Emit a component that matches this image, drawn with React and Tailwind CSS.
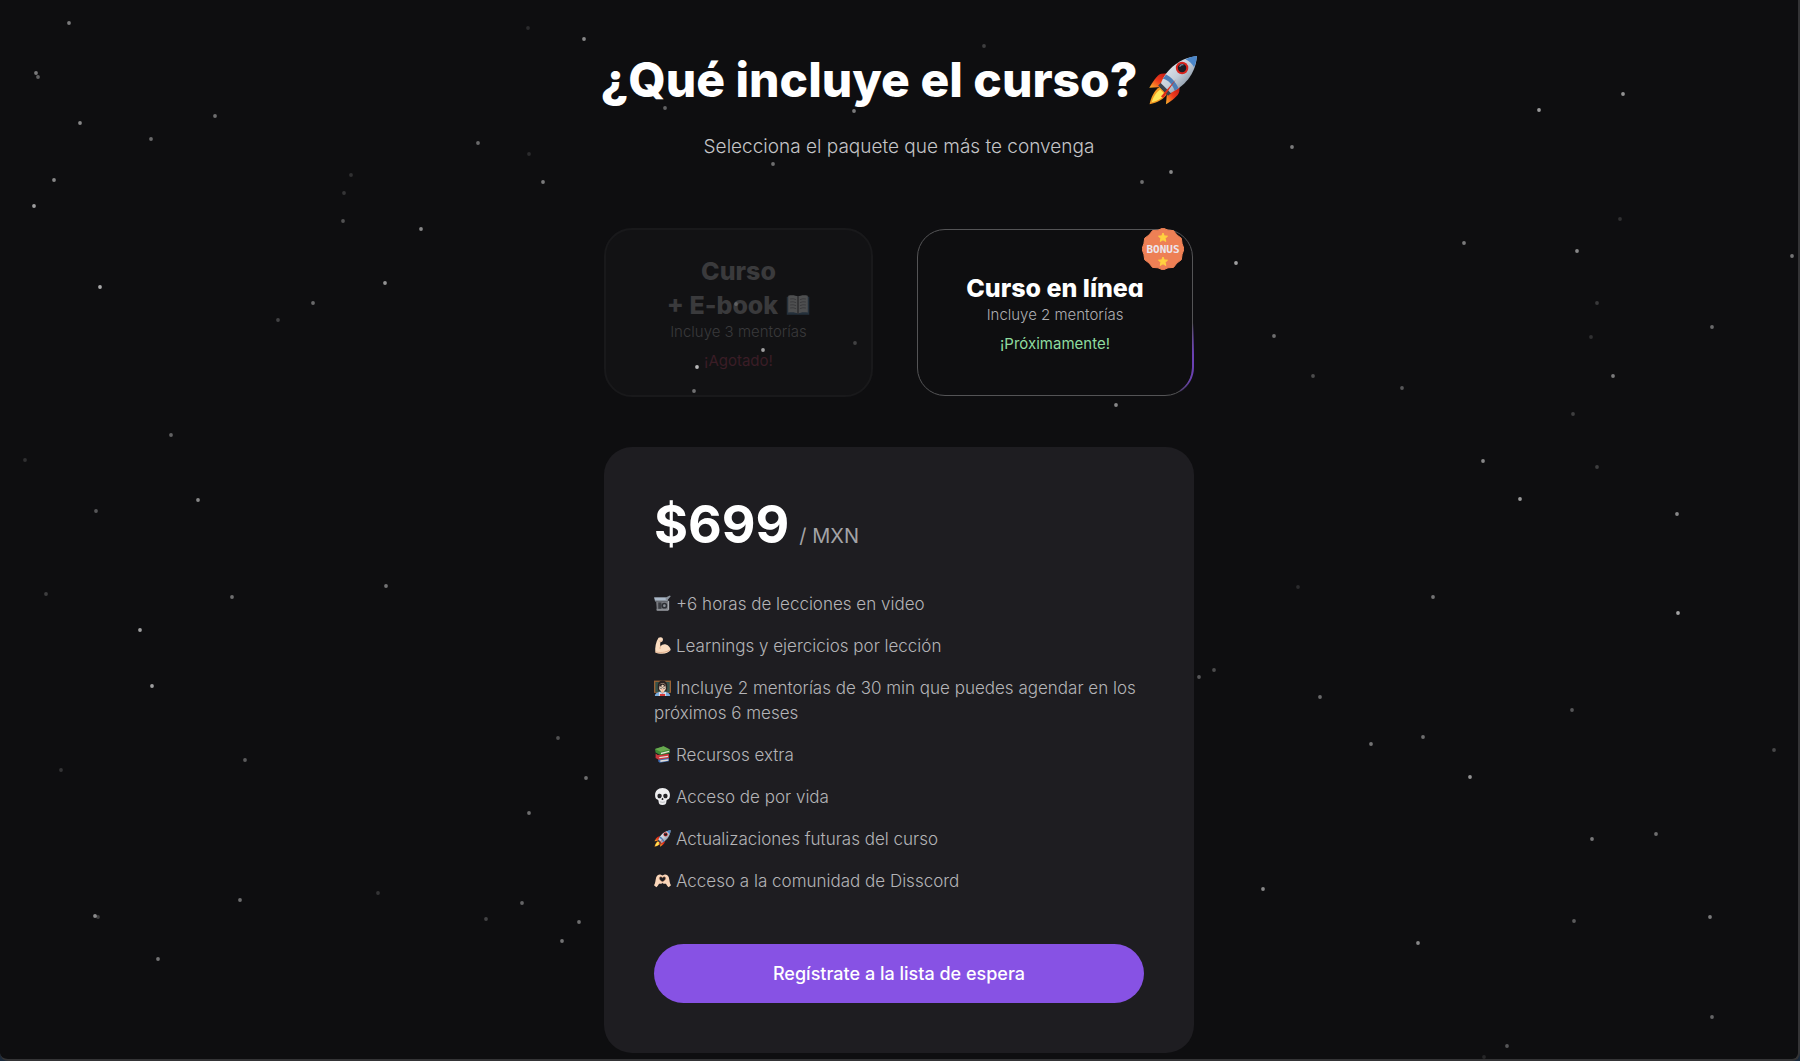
import React from "react";

// Each star: x, y, opacity
const STARS = [
  [69, 23, 0.45], [528, 28, 0.12], [584, 39, 0.5], [36, 73, 0.45], [38, 77, 0.35], [215, 116, 0.4],
  [80, 123, 0.5], [151, 139, 0.38], [478, 143, 0.38], [529, 154, 0.12], [351, 175, 0.14], [54, 180, 0.5],
  [543, 182, 0.45], [344, 193, 0.16], [34, 206, 0.6], [343, 221, 0.28], [421, 229, 0.5], [100, 287, 0.65],
  [385, 283, 0.55], [313, 303, 0.38], [278, 320, 0.22], [171, 435, 0.35], [25, 460, 0.14], [198, 500, 0.5],
  [96, 511, 0.3], [46, 594, 0.2], [232, 597, 0.4], [386, 586, 0.42], [140, 630, 0.6], [152, 686, 0.6],
  [558, 738, 0.28], [245, 760, 0.32], [61, 770, 0.16], [586, 778, 0.4], [529, 813, 0.4], [378, 893, 0.16],
  [240, 900, 0.4], [522, 903, 0.36], [95, 916, 0.52], [98, 917, 0.2], [486, 919, 0.22], [579, 922, 0.4],
  [562, 941, 0.42], [158, 959, 0.42], [1623, 94, 0.55], [1539, 110, 0.58], [1292, 147, 0.45], [1620, 219, 0.14],
  [1464, 243, 0.45], [1577, 251, 0.5], [1792, 256, 0.42], [1236, 263, 0.6], [1597, 303, 0.18], [1712, 327, 0.38],
  [1274, 336, 0.4], [1591, 337, 0.14], [1313, 376, 0.26], [1613, 376, 0.45], [1402, 388, 0.3], [1573, 414, 0.2],
  [1483, 461, 0.5], [1597, 467, 0.2], [1520, 499, 0.58], [1677, 514, 0.5], [1298, 587, 0.12], [1433, 597, 0.42],
  [1678, 613, 0.62], [1214, 670, 0.26], [1199, 677, 0.3], [1320, 697, 0.38], [1572, 710, 0.3], [1423, 737, 0.4],
  [1371, 744, 0.42], [1774, 750, 0.24], [1470, 777, 0.55], [1592, 839, 0.44], [1656, 834, 0.4], [1263, 889, 0.5],
  [1574, 921, 0.32], [1710, 917, 0.45], [1418, 943, 0.5], [1712, 1017, 0.36], [1507, 1046, 0.3], [1484, 1057, 0.1],
  [984, 46, 0.2], [665, 108, 0.35], [854, 111, 0.45], [773, 164, 0.4], [1171, 172, 0.5], [1142, 182, 0.4],
  [1116, 405, 0.5],
];

// Stars that shine through the sold-out package
const FRONT_STARS = [
  [763, 350, 0.6], [697, 367, 0.7], [694, 391, 0.4], [855, 343, 0.2], [736, 304, 0.2],
];

function StarField({ stars }) {
  return (
    <svg className="pointer-events-none absolute inset-0 h-full w-full" aria-hidden="true">
      {stars.map(([x, y, o]) => (
        <circle key={`${x}-${y}`} cx={x} cy={y} r="1.900" fill="#fff" opacity={o} />
      ))}
    </svg>
  );
}

function Rocket({ className }) {
  return (
    <svg viewBox="0 0 32 32" className={className} aria-hidden="true">
      <defs>
        <linearGradient id="rk-body" x1="0" y1="0" x2="1" y2="1">
          <stop offset="0" stopColor="#f4f7fa" />
          <stop offset="0.5" stopColor="#c3cdd8" />
          <stop offset="1" stopColor="#58687c" />
        </linearGradient>
        <linearGradient id="rk-fin" x1="1" y1="0" x2="0" y2="1">
          <stop offset="0" stopColor="#b81410" />
          <stop offset="0.55" stopColor="#ee3b1d" />
          <stop offset="1" stopColor="#fbb52c" />
        </linearGradient>
      </defs>
      <path d="M14 11.500 8.500 12C6 12.400 2.500 18 .8 21l8.400-.6z" fill="url(#rk-fin)" />
      <path d="M20.500 18.500 20 23.500c-.5 2.500-5 6-8.500 8l.8-9z" fill="url(#rk-fin)" />
      <path d="M7.500 20.500 12 25c-2 3.500-6 5.500-11 6.500 1-4.500 3-9 6.500-11z" fill="#f59a23" />
      <path d="M7.800 22 11 25.200c-2 2.400-4.700 4-8.600 5C3.400 26.500 5 24 7.800 22z" fill="#ffe65a" />
      <path d="M6.500 19.500 12.800 26l2.200-1.700L8.300 17.700z" fill="#39434f" />
      <path d="M8.300 18C11 11 18 2.500 31.300.7 30.500 13 22.500 20.500 14.500 24.300z" fill="url(#rk-body)" />
      <path d="M24 2.700C26.300 1.500 29 .9 31.300.7c-.1 2.500-.8 5-1.800 7.200-1.300-2.300-3.200-4.100-5.500-5.200z" fill="#4b86c9" />
      <path d="M11.500 12.400c3.200 1.600 6.500 4.900 8 8.800l-2.400 1.700C15.500 18.500 13 16 9.500 15.200z" fill="#4d7db5" />
      <path d="m8.300 26.500 9.500-10.800-8 11.800z" fill="#df2a17" />
      <circle cx="21.800" cy="8.300" r="4" fill="#d8231c" />
      <circle cx="21.800" cy="8.300" r="2.700" fill="#191c24" />
      <path d="M20.200 7.500c.5-1 1.500-1.500 2.500-1.200" stroke="#75839a" strokeWidth=".8" fill="none" />
    </svg>
  );
}

function OpenBook({ className }) {
  return (
    <svg viewBox="0 0 32 32" className={className} aria-hidden="true">
      <path d="M1 5h30v24H1z" fill="#2f7bbf" />
      <path d="M3 3.500c5-1 10-.5 13 1.500 3-2 8-2.500 13-1.500V26c-5-1-10-.5-13 1.500C13 25.500 8 25 3 26z" fill="#d9dbde" />
      <path d="M16 5v22.500" stroke="#4d5157" strokeWidth="1.600" />
      <path d="M5.500 8q4-1 8 .8M5.500 12q4-1 8 .8M5.500 16q4-1 8 .8M5.500 20q4-1 8 .8M26.500 8q-4-1-8 .8M26.500 12q-4-1-8 .8M26.500 16q-4-1-8 .8M26.500 20q-4-1-8 .8" stroke="#85898f" strokeWidth="1.100" fill="none" />
    </svg>
  );
}

function MovieCamera({ className }) {
  return (
    <svg viewBox="0 0 32 32" className={className} aria-hidden="true">
      <path d="M0 4h23l7-3 1.500 1.500L26 9v3H2z" fill="#8b939d" />
      <path d="M1 5h21v4.500H2z" fill="#a9b8c8" />
      <path d="M4 12h23v17H7c-2 0-3-2-2-4z" fill="#77797f" />
      <path d="M8 14h6v12H8z" fill="#3b3d42" />
      <circle cx="19.500" cy="20" r="5.500" fill="#2c2e33" />
      <circle cx="19.500" cy="20" r="2.500" fill="#8a8f96" />
      <path d="M5 27h22v2.500H5z" fill="#96999e" />
      <path d="M26 11h2.500v17H26z" fill="#a4a7ac" />
    </svg>
  );
}

function Biceps({ className }) {
  return (
    <svg viewBox="0 0 32 32" className={className} aria-hidden="true">
      <path d="M8.500 1.500c2.500-1.500 6-1.500 7.500.5 1.400 2 1 5-.5 6.500-1 1-2.300 1.400-3.500 1.500-.5 3-.4 5.500.1 7.700 2.700-3.400 6.900-4.700 10.500-3.400 4.700 1.600 8.400 5.700 8.900 10.200C28.200 28.800 22 31.500 15.500 31.500c-5.500 0-10.500-.6-13-2.300C1.500 20 3.500 8.500 8.500 1.500z" fill="#fbdcc0" />
      <path d="M12.300 17.200c-.9 1.600-1.200 3-1 4.500M9.500 7.500c1.200.8 2.700 1 4.300.3M3 28c7 2 18 1.800 26-3" stroke="#d39b75" strokeWidth="1.200" fill="none" strokeLinecap="round" />
    </svg>
  );
}

function Teacher({ className }) {
  return (
    <svg viewBox="0 0 32 32" className={className} aria-hidden="true">
      <path d="M0 3h32v23H0z" fill="#9a6335" />
      <path d="M2.500 5.500h27v19h-27z" fill="#35514a" />
      <path d="M8 22C5.500 11 8 3 16 3s10.500 8 8 19z" fill="#2b211f" />
      <path d="M1.500 32c.3-5 5-7.500 10-8.200h9c5 .7 9.700 3.200 10 8.200z" fill="#79aee0" />
      <path d="m10 24 6 4 6-4 1 8H9z" fill="#e8eef5" />
      <path d="M11 28h10v4H11z" fill="#d23838" />
      <path d="M13 20h6v5l-3 2-3-2z" fill="#e8b797" />
      <ellipse cx="16" cy="15.500" rx="6.500" ry="7.500" fill="#fbdcc0" />
      <path d="M9.200 14C10 7.500 20 6 22.800 14c-2.600-.6-5-2-6.300-3.800-1.500 2-4.300 3.400-7.300 3.800z" fill="#2b211f" />
      <circle cx="13" cy="16" r="2.200" fill="none" stroke="#3b3b42" />
      <circle cx="19" cy="16" r="2.200" fill="none" stroke="#3b3b42" />
      <path d="M14 20q2 1.500 4 0" stroke="#c2574c" fill="none" />
    </svg>
  );
}

function Books({ className }) {
  return (
    <svg viewBox="0 0 32 32" className={className} aria-hidden="true">
      <path d="m8 24 18-2.500 2 1v6L11 31.500 8 29z" fill="#3f6db5" />
      <path d="m12 27 15-2.200v3L12 30z" fill="#e2ddd6" />
      <path d="m3 14 4 3 21-2.500v8L9 26l-6-3.500z" fill="#c9383c" />
      <path d="m10 20.500 16.500-2.300v2.600L10 23z" fill="#e6dfd6" />
      <path d="m2 5.500 16-5 12 6v6.500L12 17 3 12z" fill="#3f8a35" />
      <path d="m2 5.500 16-5 12 6L12 11z" fill="#67a84f" />
      <path d="m13 12.800 15.500-4v2.600L13 15.300z" fill="#e0e8d6" />
    </svg>
  );
}

function Skull({ className }) {
  return (
    <svg viewBox="0 0 32 32" className={className} aria-hidden="true">
      <path d="M16 0C7.500 0 2 5.500 2 13c0 4.500 1 7 4.500 8.800 1.800.9 2 2 2.200 4C9 30 11 32 16 32s7-2 7.300-6.200c.2-2 .4-3.100 2.200-4C29 20 30 17.500 30 13 30 5.500 24.500 0 16 0z" fill="#eeeef0" />
      <path d="M6.500 15c0-3 2-4 4.200-4 2.400 0 4 1.400 3.800 4-.2 2.800-2 4.300-4.200 4.300S6.500 18 6.500 15zM25.500 15c0-3-2-4-4.200-4-2.400 0-4 1.400-3.800 4 .2 2.800 2 4.300 4.200 4.300s3.800-1.300 3.800-4.300z" fill="#222226" />
      <path d="M16 18.500c-1.500 1.300-2.200 3-1.500 3.800.5.500 1 .2 1.500-.2.500.4 1 .7 1.500.2.700-.8 0-2.500-1.500-3.800z" fill="#222226" />
      <path d="M11 26q5 2 10 0" stroke="#8d8d93" fill="none" />
    </svg>
  );
}

function HeartHands({ className }) {
  return (
    <svg viewBox="0 0 32 32" className={className} aria-hidden="true">
      <path d="M0 25c2.500-2.500 2.500-9 4-14.500C5.500 5.500 10 3.500 13 5l3 1.500L19 5c3-1.500 7.500.5 9 5.500 1.500 5.500 1.500 12 4 14.500l-4.500 3.500c-2-1.500-3.500-4-5-6.500-2.500.8-4.700.1-6.500-1.500-1.800 1.600-4 2.300-6.500 1.500-1.500 2.500-3 5-5 6.500z" fill="#fbd6ba" />
      <path d="M16 18.500c-4-2-6.200-4.500-6-7 .3-2.700 4-3.400 6-.8 2-2.600 5.700-1.900 6 .8.200 2.500-2 5-6 7z" fill="#1e1d21" stroke="#cf8f69" />
    </svg>
  );
}

function BonusBadge() {
  return (
    <svg viewBox="0 0 42 42" className="absolute top-[-2px] right-2 h-[42px] w-[42px]" role="img" aria-label="Bonus">
      <path
        d="M21 0l5 2.200 5.500.4 3.400 4.300 4.400 3.300.8 5.400L42 21l-1.900 5.400-.8 5.400-4.400 3.300-3.400 4.300-5.500.4L21 42l-5-2.200-5.500-.4-3.400-4.300-4.400-3.300-.8-5.400L0 21l1.900-5.400.8-5.400 4.400-3.300 3.400-4.300 5.500-.4z"
        fill="#ee8055"
        stroke="#ee8055"
        strokeLinejoin="round"
      />
      <path d="m21 5 1.300 2.900 3.200.3-2.400 2.100.7 3.200-2.800-1.700-2.800 1.700.7-3.200-2.400-2.100 3.200-.3zM21 29l1.300 2.900 3.200.3-2.400 2.100.7 3.200-2.800-1.700-2.800 1.700.7-3.200-2.400-2.100 3.200-.3z" fill="#ffd23f" stroke="#ffd23f" strokeLinejoin="round" />
      <text x="21" y="25" textAnchor="middle" className="fill-[#ece6ee] font-['DejaVu_Sans_Mono',monospace] text-[11px] font-bold">
        BONUS
      </text>
    </svg>
  );
}

const FEATURES = [
  [MovieCamera, "+6 horas de lecciones en video"],
  [Biceps, "Learnings y ejercicios por lección"],
  [Teacher, "Incluye 2 mentorías de 30 min que puedes agendar en los próximos 6 meses"],
  [Books, "Recursos extra"],
  [Skull, "Acceso de por vida"],
  [Rocket, "Actualizaciones futuras del curso"],
  [HeartHands, "Acceso a la comunidad de Disscord"],
];

export default function App() {
  return (
    <div className="bg-[#1b2a3c]">
      <div className="relative min-h-screen overflow-hidden rounded-b-lg border-r-2 border-b-2 border-[#343436] bg-[#0e0e10] font-['Inter',sans-serif]">
        <StarField stars={STARS} />

        <main className="relative flex flex-col items-center pt-12">
          <h1 className="flex items-center gap-2.5 text-[48px] leading-[64px] font-extrabold text-white">
            ¿Qué incluye el curso?
            <Rocket className="h-[50px] w-[50px]" />
          </h1>
          <p className="mt-[21px] text-[19px] leading-7 font-light text-[#c4c4c7]">
            Selecciona el paquete que más te convenga
          </p>

          <section className="mt-[67px] grid w-full max-w-[590px] grid-cols-[269fr_276fr] gap-11 pr-px" aria-label="Paquetes">
            <button
              type="button"
              disabled
              className="flex h-[169px] flex-col items-center justify-center rounded-[28px] border-2 border-[#19191b] bg-[#121214]"
            >
              <span className="flex flex-col items-center text-[25px] leading-[34px] font-extrabold text-[#3a3a3c]">
                <span>Curso</span>
                <span className="flex items-center gap-2">
                  + E-book
                  <OpenBook className="h-6 w-6 opacity-30 saturate-50" />
                </span>
              </span>
              <span className="text-[15px] leading-5 font-light text-[#39393b]">Incluye 3 mentorías</span>
              <span className="mt-[9px] text-[15px] leading-5 text-[#3a1d26]">¡Agotado!</span>
            </button>

            <button
              type="button"
              className="relative my-px flex h-[167px] flex-col items-center justify-center rounded-[28px] border border-[#545456] bg-[#0e0e10]"
            >
              <span className="text-[25px] leading-[34px] font-extrabold text-white [font-feature-settings:'cv11']">
                Curso en línea
              </span>
              <span className="text-[15px] leading-5 font-light text-[#adadb0]">Incluye 2 mentorías</span>
              <span className="mt-[9px] text-[15px] leading-5 text-[#8fdc9f]">¡Próximamente!</span>
              <svg viewBox="0 0 30 80" className="absolute right-[-2px] bottom-0 h-20 w-[30px]" aria-hidden="true">
                <defs>
                  <linearGradient id="glow" x1="0" y1="0" x2="0" y2="80" gradientUnits="userSpaceOnUse">
                    <stop offset="0.1" stopColor="#8752e4" stopOpacity="0" />
                    <stop offset="0.5" stopColor="#6a40b3" />
                    <stop offset="0.8" stopColor="#6a40b3" />
                    <stop offset="1" stopColor="#8752e4" stopOpacity="0" />
                  </linearGradient>
                </defs>
                <path d="M29 2v50c0 10-5 19-13 24" fill="none" stroke="url(#glow)" strokeWidth="2" />
              </svg>
              <BonusBadge />
            </button>
          </section>

          <section className="mt-[50px] w-full max-w-[590px] rounded-[28px] bg-[#1e1d21] p-[50px]">
            <p className="flex items-baseline gap-2.5 leading-[56px]">
              <span className="text-[52px] font-bold text-white">$699</span>
              <span className="text-[20px] text-[#a3a3a6]">/ MXN</span>
            </p>
            <ul className="mt-7 flex flex-col gap-[17px] text-[17px] leading-[25px] font-light text-[#b4b4b7]">
              {FEATURES.map(([Icon, label]) => (
                <li key={label}>
                  <Icon className="mr-[5px] mb-1 inline-block h-[17px] w-[17px]" />
                  {label}
                </li>
              ))}
            </ul>
            <button
              type="button"
              className="mt-[50px] h-[59px] w-full rounded-full bg-[#8752e4] text-[18px] font-medium text-white"
            >
              Regístrate a la lista de espera
            </button>
          </section>
        </main>

        <StarField stars={FRONT_STARS} />
      </div>
    </div>
  );
}
